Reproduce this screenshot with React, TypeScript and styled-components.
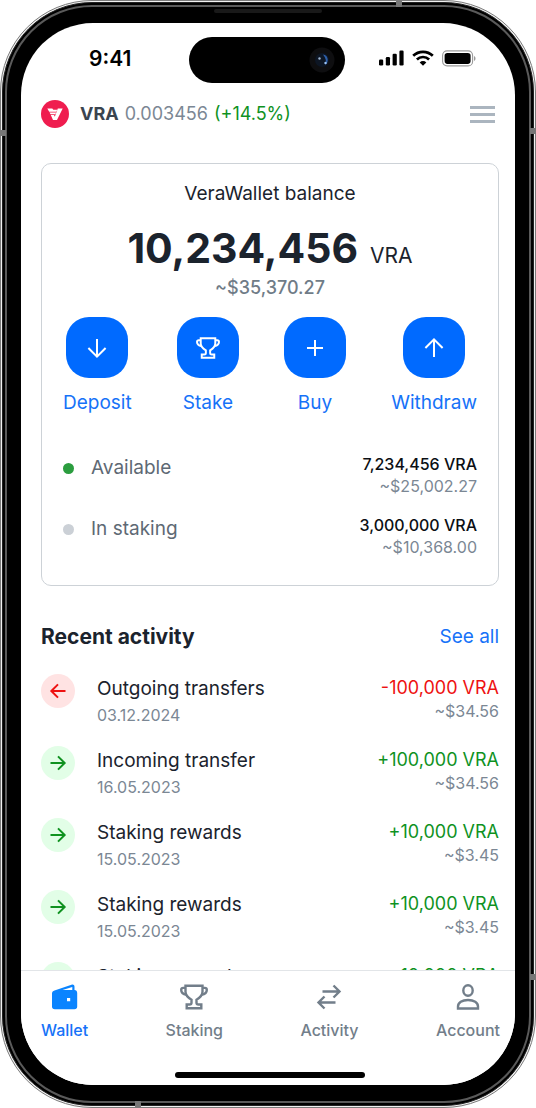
import React from "react";
import styled, { createGlobalStyle, css } from "styled-components";

const Global = createGlobalStyle`
  *, *::before, *::after { box-sizing: border-box; }
  body { margin: 0; background: #fff; font-family: Inter, "Liberation Sans", sans-serif; color: #1b232d; }
  button { font: inherit; border: 0; background: none; padding: 0; cursor: pointer; }
  a { text-decoration: none; color: inherit; }
  h1, h2, p, ul { margin: 0; padding: 0; }
  li { list-style: none; }
`;

const Device = styled.div`
  position: relative;
  height: 100vh;
  min-height: 800px;
  padding: 1px;
  border-radius: 92px;
  border: 1px solid #7b7b7b;
  background: #f1f1f1;
`;

const Rim = styled.div`
  height: 100%;
  padding: 2px;
  border-radius: 90px;
  border: 1px solid #222;
  background: #000;
`;

const Bezel = styled.div`
  height: 100%;
  padding: 16px 14px;
  border-radius: 87px;
  border: 2px solid #5a5a5a;
  background: #000;
`;

const Speaker = styled.span`
  position: absolute;
  top: 8px;
  left: 50%;
  width: 108px;
  height: 4px;
  margin-left: -54px;
  border-radius: 2px;
  background: #191919;
`;

const Antenna = styled.span<{ $side: "top" | "left" | "right" | "bottom"; $at: string }>`
  position: absolute;
  background: #777;
  ${({ $side, $at }) =>
    $side === "top" || $side === "bottom"
      ? css`${$side}: 0; left: ${$at}; width: 6px; height: 6px;`
      : css`${$side}: -1px; top: ${$at}; width: 6px; height: 6px;`}
`;

const Screen = styled.div`
  position: relative;
  height: 100%;
  display: flex;
  flex-direction: column;
  overflow: hidden;
  border-radius: 72px;
  background: #fff;
`;

const StatusBar = styled.div`
  display: grid;
  grid-template-columns: 1fr 156px 1fr;
  align-items: center;
  padding: 14px 2px 0 0;
`;

const Clock = styled.time`
  padding-left: 68px;
  padding-bottom: 2px;
  font-size: 21px;
  line-height: 24px;
  font-weight: 600;
  color: #000;
`;

const Island = styled.div`
  height: 46px;
  border-radius: 23px;
  background: #000;
  display: flex;
  align-items: center;
  justify-content: flex-end;
  padding-right: 10px;
`;

const StatusIcons = styled.div`
  display: flex;
  align-items: center;
  gap: 8px;
  padding-left: 34px;
  padding-bottom: 4px;
`;

const Header = styled.header`
  display: flex;
  align-items: center;
  padding: 15px 20px 0 20px;
  margin-bottom: 33px;
`;

const Price = styled.p`
  flex: 1;
  display: flex;
  gap: 6px;
  padding-left: 11px;
  font-size: 18px;
  line-height: 32px;
  color: #7b8794;
  strong { font-weight: 700; color: #3a444f; }
  em { font-style: normal; color: #0f921f; }
`;

const MenuButton = styled.button`
  display: grid;
  gap: 4px;
  width: 25px;
  span { height: 3px; background: #abb5bf; }
`;

const Content = styled.main`
  flex: 1;
  min-height: 0;
  overflow: hidden;
  padding: 0 16px 0 20px;
`;

const Card = styled.section`
  border: 1px solid #cdd2d7;
  border-radius: 10px;
  padding: 17px 21px 27px;
`;

const CardTitle = styled.h2`
  font-size: 19px;
  line-height: 26px;
  font-weight: 400;
  text-align: center;
`;

const Balance = styled.p`
  display: flex;
  justify-content: center;
  align-items: baseline;
  gap: 12px;
  padding-top: 21px;
  line-height: 40px;
  strong { font-size: 41px; font-weight: 700; }
  span { font-size: 21px; }
`;

const Fiat = styled.p`
  font-size: 18px;
  line-height: 24px;
  text-align: center;
  font-weight: 500;
  color: #707c87;
`;

const Actions = styled.div`
  display: flex;
  justify-content: space-between;
  padding-top: 17px;
`;

const Action = styled.button`
  display: flex;
  flex-direction: column;
  align-items: center;
  gap: 12px;
  font-size: 19px;
  line-height: 26px;
  color: #1672f8;
`;

const Tile = styled.span`
  display: grid;
  place-items: center;
  width: 62px;
  height: 61px;
  border-radius: 23px;
  background: #006aff;
  color: #fff;
`;

const Holdings = styled.ul`
  display: grid;
  gap: 17px;
  padding-top: 37px;
`;

const Holding = styled.li`
  display: flex;
  align-items: flex-start;
`;

const Dot = styled.span<{ $color: string }>`
  width: 11px;
  height: 11px;
  border-radius: 50%;
  background: ${({ $color }) => $color};
  margin: 10px 17px 0 0;
`;

const HoldingName = styled.span`
  flex: 1;
  font-size: 19px;
  line-height: 30px;
  color: #5e6974;
`;

const Amounts = styled.span`
  display: flex;
  flex-direction: column;
  align-items: flex-end;
`;

const HoldingAmount = styled.span`
  font-size: 16px;
  line-height: 22px;
  font-weight: 500;
  color: #0b0f14;
`;

const Muted = styled.span`
  font-size: 16px;
  line-height: 22px;
  color: #7b8794;
`;

const SectionHead = styled.div`
  display: flex;
  justify-content: space-between;
  align-items: center;
  padding-top: 36px;
  line-height: 30px;
  h2 { font-size: 21px; font-weight: 700; }
  a { font-size: 19px; color: #1672f8; }
`;

const Feed = styled.ul`
  padding-top: 22px;
  display: grid;
  gap: 20px;
`;

const Entry = styled.li`
  display: flex;
  align-items: flex-start;
  height: 52px;
`;

const Badge = styled.span<{ $out?: boolean }>`
  display: grid;
  place-items: center;
  width: 34px;
  height: 34px;
  margin-right: 22px;
  border-radius: 50%;
  background: ${({ $out }) => ($out ? "#ffe3e3" : "#e2fee7")};
  color: ${({ $out }) => ($out ? "#ee1111" : "#0f921f")};
`;

const EntryText = styled.span`
  flex: 1;
  display: flex;
  flex-direction: column;
  gap: 2px;
  padding-top: 2px;
  font-size: 19px;
  line-height: 26px;
`;

const EntryAmounts = styled(Amounts)`
  padding-top: 2px;
`;

const EntryAmount = styled.span<{ $out?: boolean }>`
  font-size: 18px;
  line-height: 24px;
  color: ${({ $out }) => ($out ? "#ee1111" : "#0f921f")};
`;

const TabBar = styled.nav`
  display: flex;
  justify-content: space-between;
  padding: 12px 15px 0 20px;
  height: 115px;
  border-top: 1px solid #e2e5e8;
  background: #fff;
`;

const Tab = styled.a<{ $active?: boolean }>`
  display: flex;
  flex-direction: column;
  align-items: center;
  gap: 7px;
  font-size: 16px;
  line-height: 24px;
  font-weight: 500;
  color: ${({ $active }) => ($active ? "#1672f8" : "#727e8a")};
`;

const HomeBar = styled.span`
  position: absolute;
  bottom: 7px;
  left: 50%;
  width: 190px;
  height: 6px;
  margin-left: -93px;
  border-radius: 3px;
  background: #000;
`;

type IconProps = { size: number; stroke?: number };

const svgBase = { fill: "none", stroke: "currentColor", "aria-hidden": true } as const;

const Arrow = ({ dir, size, stroke = 2 }: IconProps & { dir: "up" | "down" | "left" | "right" }) => {
  const paths = {
    down: "M12 3v17.500M3.400 12l8.600 8.600 8.600-8.600",
    up: "M12 21V3.500M3.400 12 12 3.400l8.600 8.600",
    left: "M21 12H3.500M12 4l-8 8 8 8",
    right: "M3 12h17.500M12 4l8 8-8 8",
  };
  return (
    <svg width={size} height={size} viewBox="0 0 24 24" {...svgBase} strokeWidth={stroke}>
      <path d={paths[dir]} />
    </svg>
  );
};

const Trophy = ({ size, stroke = 2 }: IconProps) => (
  <svg width={size} height={size} viewBox="0 0 28 28" {...svgBase} strokeWidth={stroke}>
    <path d="M5.500 2.700h17v6c0 3.500-2.500 5.900-6 8v3c0 1.200.8 1.800 2 1.800h2.800v3.800H6.700v-3.800h2.800c1.200 0 2-.6 2-1.800v-3c-3.500-2.100-6-4.500-6-8z" />
    <path d="M5.500 4.900H3.200c-1.300 0-2 .7-2 2 0 2.300 2 4.200 5.300 4.800M22.500 4.900h2.300c1.300 0 2 .7 2 2 0 2.300-2 4.200-5.300 4.800" />
  </svg>
);

const Plus = () => (
  <svg width="18" height="18" viewBox="0 0 18 18" {...svgBase} strokeWidth="2">
    <path d="M9 1v16M1 9h16" />
  </svg>
);

const WalletIcon = () => (
  <svg width="28" height="28" viewBox="0 0 28 28" aria-hidden>
    <path
      fill="#0a84ff"
      fillRule="evenodd"
      d="M3.500 7.500 20.500 1.800c1.700-.6 3 .4 3 2v3.300c1.600.1 2.700 1.200 2.700 2.800v13.600c0 1.800-1.100 2.700-2.700 2.700H3.800C2 26.200 1 25.200 1 23.500V10.500c0-1.600 1-2.500 2.500-3zM11.500 7.100h9.800V3.900zM16 15h3.200v3.200H16z"
    />
  </svg>
);

const SwapIcon = () => (
  <svg width="28" height="28" viewBox="0 0 28 28" {...svgBase} strokeWidth="2.400">
    <path d="M7.500 8.500h17M18.500 2.500l6 6-6 6M20.500 19.500h-17M9.500 13.500l-6 6 6 6" />
  </svg>
);

const PersonIcon = () => (
  <svg width="28" height="28" viewBox="0 0 28 28" {...svgBase} strokeWidth="2.400">
    <ellipse cx="14" cy="7.500" rx="4.700" ry="5.300" />
    <path d="M4 25.500v-2c0-3.800 4-6.500 10-6.500s10 2.700 10 6.500v2z" />
  </svg>
);

const Logo = () => (
  <svg width="28" height="28" viewBox="0 0 28 28" aria-hidden>
    <circle cx="14" cy="14" r="14" fill="#ef1d4f" />
    <g fill="#fff">
      <path d="M6.300 8.500h5l1 1.200h3.900l-.8 2H8.200z" />
      <path d="M8.500 12.500h6.600l-.7 1.700H9.500z" />
      <path d="M9.800 15h3.200l.8 1.800 3-8.300h4.900L16 20h-4z" />
    </g>
  </svg>
);

const SignalIcon = () => (
  <svg width="25" height="16" viewBox="0 0 25 16" fill="#000" aria-hidden>
    <rect x="0" y="9.500" width="4.200" height="6" rx="1.200" />
    <rect x="6.800" y="7" width="4.200" height="8.500" rx="1.200" />
    <rect x="13.600" y="3.700" width="4.200" height="11.800" rx="1.200" />
    <rect x="20.400" y="0.500" width="4.200" height="15" rx="1.200" />
  </svg>
);

const WifiIcon = () => (
  <svg width="22" height="16" viewBox="0 0 22 16" fill="none" stroke="#000" strokeWidth="2.700" aria-hidden>
    <path d="M1.200 5.800a14 14 0 0 1 19.600 0M4.900 9.500a8.700 8.700 0 0 1 12.200 0" />
    <path fill="#000" stroke="none" d="m11 15.700-3.300-3.300a4.700 4.700 0 0 1 6.600 0z" />
  </svg>
);

const BatteryIcon = () => (
  <svg width="34" height="17" viewBox="0 0 34 17" aria-hidden>
    <rect x=".6" y=".9" width="30" height="15" rx="4.500" fill="none" stroke="#9a9a9a" strokeWidth="1.100" />
    <rect x="2.600" y="2.900" width="26" height="11" rx="2.800" fill="#000" />
    <path d="M32 6v5c2-.8 2-4.200 0-5z" fill="#9a9a9a" />
  </svg>
);

const CameraLens = () => (
  <svg width="26" height="26" viewBox="0 0 26 26" aria-hidden>
    <circle cx="13" cy="13" r="12.500" fill="#0e0e10" />
    <circle cx="13" cy="13" r="7" fill="#0d1624" />
    <path d="M14 7.500c5 .5 6.500 7 2.500 10.500 1-3.500.5-7-2.500-10.500z" fill="#2d5ea8" />
    <circle cx="10.500" cy="11.500" r="1.200" fill="#9fb4d0" />
    <circle cx="16.500" cy="16" r="1.200" fill="#9cc3f5" />
  </svg>
);

const actions = [
  { label: "Deposit", icon: <Arrow dir="down" size={24} stroke={2} /> },
  { label: "Stake", icon: <Trophy size={24} stroke={2.3} /> },
  { label: "Buy", icon: <Plus /> },
  { label: "Withdraw", icon: <Arrow dir="up" size={24} stroke={2} /> },
];

const holdings = [
  { name: "Available", color: "#2b9d3f", amount: "7,234,456 VRA", fiat: "~$25,002.27" },
  { name: "In staking", color: "#cbd0d6", amount: "3,000,000 VRA", fiat: "~$10,368.00" },
];

const feed = [
  { title: "Outgoing transfers", date: "03.12.2024", amount: "-100,000 VRA", fiat: "~$34.56", out: true },
  { title: "Incoming transfer", date: "16.05.2023", amount: "+100,000 VRA", fiat: "~$34.56" },
  { title: "Staking rewards", date: "15.05.2023", amount: "+10,000 VRA", fiat: "~$3.45" },
  { title: "Staking rewards", date: "15.05.2023", amount: "+10,000 VRA", fiat: "~$3.45" },
  { title: "Staking rewards", date: "15.05.2023", amount: "+10,000 VRA", fiat: "~$3.45" },
];

const tabs = [
  { label: "Wallet", icon: <WalletIcon />, active: true },
  { label: "Staking", icon: <Trophy size={28} stroke={2.4} /> },
  { label: "Activity", icon: <SwapIcon /> },
  { label: "Account", icon: <PersonIcon /> },
];

export default function App() {
  return (
    <>
      <Global />
      <Device>
        <Rim>
          <Bezel>
            <Screen>
              <StatusBar>
                <Clock>9:41</Clock>
                <Island><CameraLens /></Island>
                <StatusIcons><SignalIcon /><WifiIcon /><BatteryIcon /></StatusIcons>
              </StatusBar>
              <Header>
                <Logo />
                <Price><strong>VRA</strong><span>0.003456</span><em>(+14.5%)</em></Price>
                <MenuButton aria-label="Menu"><span /><span /><span /></MenuButton>
              </Header>
              <Content>
                <Card>
                  <CardTitle>VeraWallet balance</CardTitle>
                  <Balance><strong>10,234,456</strong><span>VRA</span></Balance>
                  <Fiat>~$35,370.27</Fiat>
                  <Actions>
                    {actions.map((a) => (
                      <Action key={a.label}><Tile>{a.icon}</Tile>{a.label}</Action>
                    ))}
                  </Actions>
                  <Holdings>
                    {holdings.map((h) => (
                      <Holding key={h.name}>
                        <Dot $color={h.color} />
                        <HoldingName>{h.name}</HoldingName>
                        <Amounts>
                          <HoldingAmount>{h.amount}</HoldingAmount>
                          <Muted>{h.fiat}</Muted>
                        </Amounts>
                      </Holding>
                    ))}
                  </Holdings>
                </Card>
                <SectionHead>
                  <h2>Recent activity</h2>
                  <a href="#activity">See all</a>
                </SectionHead>
                <Feed>
                  {feed.map((f, i) => (
                    <Entry key={i}>
                      <Badge $out={f.out}><Arrow dir={f.out ? "left" : "right"} size={20} stroke={2.4} /></Badge>
                      <EntryText>{f.title}<Muted>{f.date}</Muted></EntryText>
                      <EntryAmounts>
                        <EntryAmount $out={f.out}>{f.amount}</EntryAmount>
                        <Muted>{f.fiat}</Muted>
                      </EntryAmounts>
                    </Entry>
                  ))}
                </Feed>
              </Content>
              <TabBar>
                {tabs.map((t) => (
                  <Tab key={t.label} href={"#" + t.label.toLowerCase()} $active={t.active}>
                    {t.icon}{t.label}
                  </Tab>
                ))}
              </TabBar>
              <HomeBar />
            </Screen>
          </Bezel>
        </Rim>
        <Speaker />
        <Antenna $side="top" $at="74%" />
        <Antenna $side="bottom" $at="25%" />
        <Antenna $side="left" $at="129px" />
        <Antenna $side="right" $at="127px" />
        <Antenna $side="right" $at="88%" />
      </Device>
    </>
  );
}
